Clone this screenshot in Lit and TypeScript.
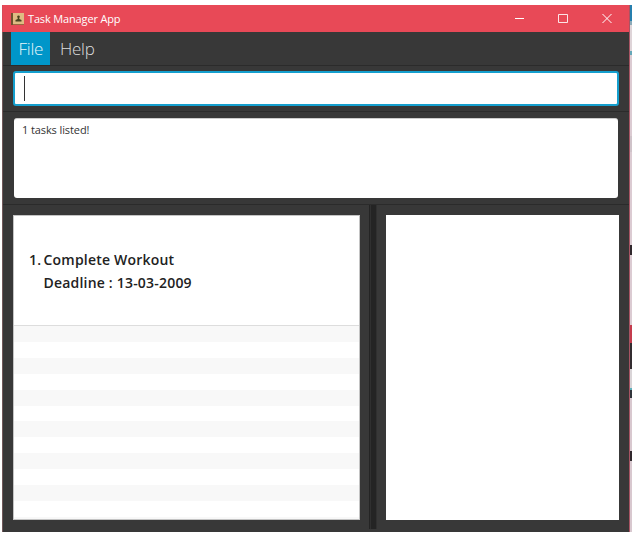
import { LitElement, html, css, svg } from "lit";
import { customElement } from "lit/decorators.js";

@customElement("app-root")
export class AppRoot extends LitElement {
  static styles = css`
    :host { display: block; width: 632px; height: 533px; overflow: hidden; background: #fff; font-family: "Open Sans", "Noto Sans", sans-serif; }
    * { box-sizing: border-box; }
    .desk { display: grid; grid-template-columns: 3px 626px 3px; height: 533px; padding-top: 5px; }
    .left { margin: 0 0 1px 2px; background: linear-gradient(#d84a58 27px, #70585a 27px); }
    .behind { display: flex; flex-direction: column; border-left: 1px solid #a85463; height: 527px; }
    .behind i { display: block; flex: none; }
    .win { height: 527px; background: #383838; display: flex; flex-direction: column; }
    .title { height: 27px; flex: none; background: #e84957; color: #fff; display: flex; align-items: center; padding-left: 8px; }
    .title .name { font-size: 11px; line-height: 16px; margin: 0 auto 0 4px; letter-spacing: -0.15px; white-space: nowrap; }
    .menu { height: 34px; flex: none; display: flex; padding-left: 8px; border-bottom: 1px solid #2b2b2b; color: #dedede; font-size: 17px; font-weight: 300; line-height: 33px; letter-spacing: -0.25px; white-space: nowrap; }
    .item { height: 33px; width: 39px; padding-left: 7.5px; }
    .active { background: #0096c9; color: #e8f6fb; }
    .help { padding-left: 10px; width: 60px; }
    .cmd { height: 46px; flex: none; padding: 5px 10px 6px; border-bottom: 1px solid #2b2b2b; }
    .input { height: 35px; background: #fff; border: 2px solid #159fce; border-radius: 3px; padding: 3px 0 0 9px; }
    .caret { width: 1px; height: 25px; background: #333; }
    .result { height: 93px; flex: none; padding: 6px 11px 6px 11px; border-bottom: 1px solid #2b2b2b; }
    .message { height: 80px; background: #fff; border-top: 1px solid #ccc; border-radius: 3px; padding: 3px 8px; font-size: 11px; line-height: 16px; letter-spacing: -0.1px; color: #333; white-space: nowrap; }
    .split { flex: 1; display: grid; grid-template-columns: 347px 8px 233px; column-gap: 9px; padding-left: 10px; }
    .list { margin-top: 10px; height: 305px; background: #fff; border: 1px solid #c4c4c4; }
    .card { height: 110px; padding: 32px 0 0 15px; border-bottom: 1px solid #ddd; font-weight: 600; font-size: 14px; line-height: 23px; letter-spacing: 0.2px; color: #222; white-space: nowrap; }
    .row { display: flex; }
    .num { width: 14.500px; flex: none; }
    .stripes { height: 193px; background: repeating-linear-gradient(#f8f8f8 0 16px, #fff 16px 31.8px); }
    .divider { height: 324px; background: linear-gradient(90deg, #242424 0 1px, #303030 1px 2px, #242424 2px 7px, #303030 7px); }
    .browser { margin-top: 10px; height: 305px; background: #fff; }
  `;

  private icon() {
    return html`<svg width="13" height="14" viewBox="0 0 13 14">${svg`
      <path d="M0 1h13v12H0z" fill="#dfbb83"/>
      <path d="M0 1h2v12H0z" fill="#70512e"/>
      <path d="M2 12h11v1H2z" fill="#9a6841"/>
      <path d="M7.500 3.500C6 3.500 5.800 4.700 6.700 6v1L4.500 8v1.500h6V8L8.300 7V6C9.200 4.700 9 3.500 7.500 3.500z" fill="#49421f"/>
    `}</svg>`;
  }

  private captionIcons() {
    return html`<svg width="115" height="27" viewBox="0 0 115 27" fill="none" stroke="#fff" stroke-width="1">
      <path d="M1 13.500h9" /><path d="M44.500 9.500h9v8h-9z" stroke-opacity=".85"/>
      <path d="M88.500 9l9 9M97.500 9l-9 9" stroke-width="1"/>
    </svg>`;
  }

  // Slivers of the windows lying underneath, as [height, colour].
  private strips: [number, string][] = [
    [16, "#267fae"], [4, "#8caab8"], [26, "#ded4d8"], [4, "#65a7b8"],
    [81, "#dbcbd2"], [16, "#cfc3c9"], [93, "#dbcbd2"], [10, "#30282d"],
    [70, "#dbcbd2"], [18, "#c43c4d"], [26, "#332c30"], [19, "#d9d4d7"],
    [2, "#5eb0bb"], [8, "#30343a"], [53, "#d8c8cf"], [10, "#30282d"], [71, "#d8c8cf"],
  ];

  render() {
    return html`<div class="desk">
      <div class="left"></div>
      <main class="win">
        <header class="title">${this.icon()}<span class="name">Task Manager App</span>${this.captionIcons()}</header>
        <nav class="menu"><span class="item active">File</span><span class="item help">Help</span></nav>
        <section class="cmd"><div class="input"><div class="caret"></div></div></section>
        <section class="result"><div class="message"><span class="msg">1 tasks listed!</span></div></section>
        <section class="split">
          <div class="list">
            <div class="card">
              <div class="row"><span class="num">1.</span><span class="task">Complete Workout</span></div>
              <div class="row"><span class="num"></span><span class="due">Deadline : 13-03-2009</span></div>
            </div>
            <div class="stripes"></div>
          </div>
          <div class="divider"></div>
          <div class="browser"></div>
        </section>
      </main>
      <div class="behind">${this.strips.map(([h, c]) => html`<i style="height:${h}px;background:${c}"></i>`)}</div>
    </div>`;
  }
}
